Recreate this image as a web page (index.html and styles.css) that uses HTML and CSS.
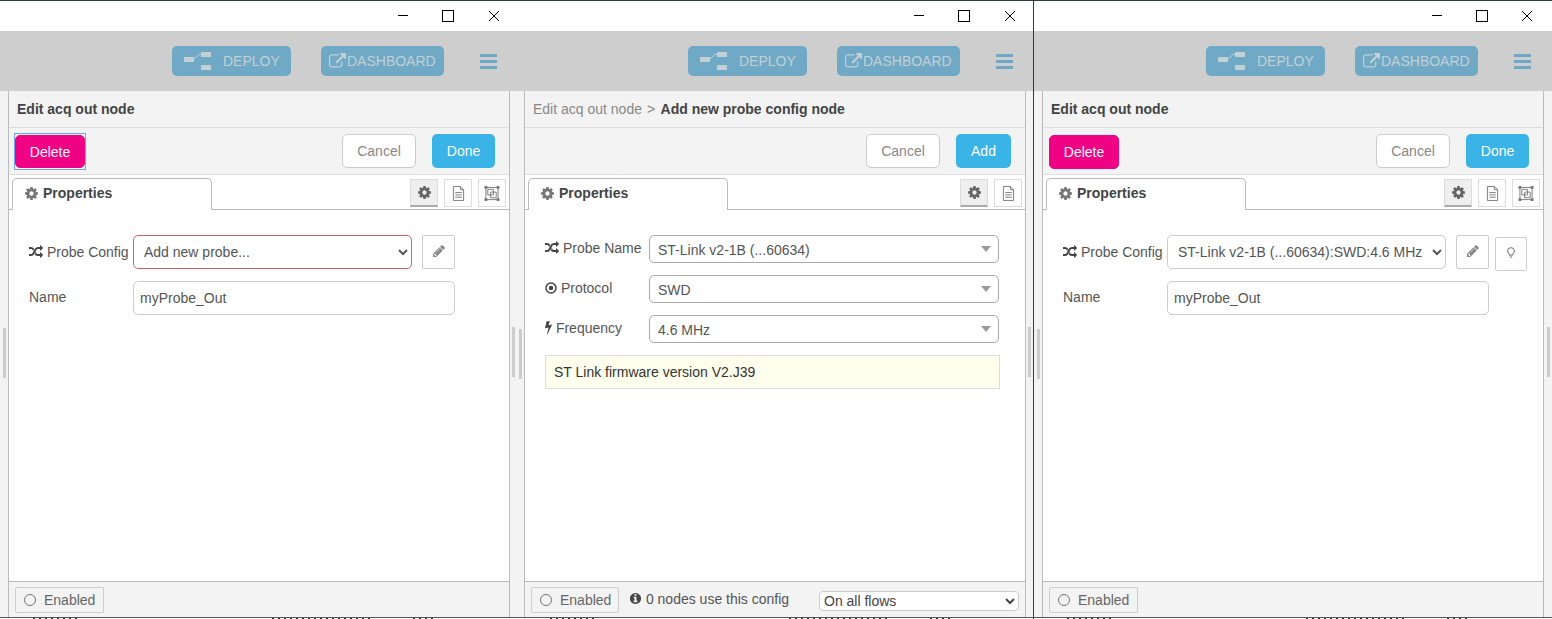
FILE: index.html
```html
<!DOCTYPE html>
<html lang="en">
<head>
    <meta charset="UTF-8">
    <title>Edit acq out node</title>
    <link rel="stylesheet" href="styles.css">
</head>
<body>
    <svg class="sprite" xmlns="http://www.w3.org/2000/svg">
        <symbol id="i-cog" viewBox="0 0 1792 1792"><path d="M1152 896q0-106-75-181t-181-75-181 75-75 181 75 181 181 75 181-75 75-181zm512-109v222q0 12-8 23t-20 13l-185 28q-19 54-39 91 35 50 107 138 10 12 10 25t-9 23q-27 37-99 108t-94 71q-12 0-26-9l-138-108q-44 23-91 38-16 136-29 186-7 28-36 28h-222q-14 0-24.5-8.5t-11.5-21.5l-28-184q-49-16-90-37l-141 107q-10 9-25 9-14 0-25-11-126-114-165-168-7-10-7-23 0-12 8-23 15-21 51-66.5t54-70.5q-27-50-41-99l-183-27q-13-2-21-12.5t-8-23.5v-222q0-12 8-23t19-13l186-28q14-46 39-92-40-57-107-138-10-12-10-24 0-10 9-23 26-36 98.5-107.5t94.5-71.5q13 0 26 10l138 107q44-23 91-38 16-136 29-186 7-28 36-28h222q14 0 24.5 8.5t11.5 21.5l28 184q49 16 90 37l142-107q9-9 24-9 13 0 25 10 129 119 165 170 7 8 7 22 0 12-8 23-15 21-51 66.5t-54 70.5q26 50 41 98l183 28q13 2 21 12.5t8 23.5z"/></symbol>
        <symbol id="i-pencil" viewBox="0 0 1792 1792"><path d="M491 1536l91-91-235-235-91 91v107h128v128h107zm523-928q0-22-22-22-10 0-17 7l-542 542q-7 7-7 17 0 22 22 22 10 0 17-7l542-542q7-7 7-17zm-54-192l416 416-832 832h-416v-416zm683 96q0 53-37 90l-166 166-416-416 166-165q36-38 90-38 53 0 91 38l235 234q37 39 37 91z"/></symbol>
        <symbol id="i-random" viewBox="0 0 1792 1792"><path d="M666 481q-60 92-137 273-22-45-37-72.5t-40.5-63.5-51-56.5-63-35-81.5-14.5h-224q-14 0-23-9t-9-23v-192q0-14 9-23t23-9h224q250 0 410 225zm1126 799q0 14-9 23l-320 320q-9 9-23 9-13 0-22.5-9.5t-9.5-22.5v-192q-32 0-85 .5t-81 1-73-1-71-5-64-10.5-63-18.5-58-28.5-59-40-55-53.5-56-69.5q59-93 136-273 22 45 37 72.5t40.5 63.5 51 56.5 63 35 81.5 14.5h256v-192q0-14 9-23t23-9q12 0 24 10l319 319q9 9 9 23zm0-896q0 14-9 23l-320 320q-9 9-23 9-13 0-22.5-9.5t-9.5-22.5v-192h-256q-48 0-87 15t-69 45-51 61.5-45 77.5q-32 62-78 171-29 66-49.5 111t-54 105-64 100-74 83-90 68.5-106.5 42-128 16.5h-224q-14 0-23-9t-9-23v-192q0-14 9-23t23-9h224q48 0 87-15t69-45 51-61.5 45-77.5q32-62 78-171 29-66 49.5-111t54-105 64-100 74-83 90-68.5 106.5-42 128-16.5h256v-192q0-14 9-23t23-9q12 0 24 10l319 319q9 9 9 23z"/></symbol>
        <symbol id="i-link" viewBox="0 0 1792 1792"><path d="M1408 928v320q0 119-84.5 203.5t-203.5 84.5h-832q-119 0-203.5-84.5t-84.5-203.5v-832q0-119 84.5-203.5t203.5-84.5h704q14 0 23 9t9 23v64q0 14-9 23t-23 9h-704q-66 0-113 47t-47 113v832q0 66 47 113t113 47h832q66 0 113-47t47-113v-320q0-14 9-23t23-9h64q14 0 23 9t9 23zm384-864v512q0 26-19 45t-45 19-45-19l-176-176-652 652q-10 10-23 10t-23-10l-114-114q-10-10-10-23t10-23l652-652-176-176q-19-19-19-45t19-45 45-19h512q26 0 45 19t19 45z"/></symbol>
        <symbol id="i-bolt" viewBox="440 220 920 1570"><path d="M1333 566q18 20 7 44l-540 1157q-13 25-42 25-4 0-14-2-17-5-25.5-19t-4.5-30l197-808-406 101q-4 1-12 1-18 0-31-11-18-15-13-39l201-825q4-14 16-23t28-9h328q19 0 32 12.5t13 29.5q0 8-5 18l-171 463 396-98q8-2 12-2 19 0 34 15z"/></symbol>
        <symbol id="i-info" viewBox="0 0 1792 1792"><path d="M1152 1376v-160q0-14-9-23t-23-9h-96v-512q0-14-9-23t-23-9h-320q-14 0-23 9t-9 23v160q0 14 9 23t23 9h96v320h-96q-14 0-23 9t-9 23v160q0 14 9 23t23 9h448q14 0 23-9t9-23zm-128-896v-160q0-14-9-23t-23-9h-192q-14 0-23 9t-9 23v160q0 14 9 23t23 9h192q14 0 23-9t9-23zm640 416q0 209-103 385.5t-279.5 279.5-385.5 103-385.5-103-279.5-279.5-103-385.5 103-385.5 279.5-279.5 385.5-103 385.5 103 279.5 279.5 103 385.5z"/></symbol>
        <symbol id="i-dot" viewBox="0 0 12 12"><circle cx="6" cy="6" r="5" fill="none" stroke="currentColor" stroke-width="1.5"/><circle cx="6" cy="6" r="2.2"/></symbol>
        <symbol id="i-doc" viewBox="0 0 14 16"><path d="M1.5 .5h7.5l3.5 3.5v11.5h-11zM9 .5v3.5h3.5M3.5 7h7M3.500 9.500h7M3.500 12h7" fill="none" stroke="currentColor"/></symbol>
        <symbol id="i-frame" viewBox="0 0 16 16"><path d="M1.500 1.500h13v13h-13z" fill="none" stroke="currentColor"/><path d="M3.500 3.500h6v6h-6zM6.500 6.500h6v6h-6z" fill="none" stroke="currentColor"/><path d="M0 0h3v3h-3zM13 0h3v3h-3zM0 13h3v3h-3zM13 13h3v3h-3z"/></symbol>
        <symbol id="i-bulb" viewBox="0 0 10 14"><path d="M3.200 9.500c0-1.600-2.400-2.500-2.400-5a4.200 4 0 0 1 8.400 0c0 2.500-2.400 3.400-2.400 5z" fill="none" stroke="currentColor" stroke-width="1.300"/><path d="M3.300 10.500h3.400v1h-3.400zM4 12.300h2v1h-2z"/></symbol>
        <symbol id="i-deploy" viewBox="0 0 27 18"><path d="M0 5h10v5h-10zM17 0h10v5h-10zM17 13h10v5h-10z"/><path d="M9 8l6-5.500h3" fill="none" stroke="currentColor"/></symbol>
        <symbol id="i-close" viewBox="0 0 10 10"><path d="M0 0l10 10M10 0l-10 10" fill="none" stroke="currentColor"/></symbol>
    </svg>

    <div class="win win-a">
        <div class="titlebar">
            <span class="ctl ctl-min"></span><span class="ctl ctl-max"></span><span class="ctl ctl-close"><svg class="close-icon"><use href="#i-close"/></svg></span>
        </div>
        <div class="header">
            <button class="head-btn deploy"><svg class="deploy-icon"><use href="#i-deploy"/></svg>DEPLOY</button>
            <button class="head-btn dash"><svg class="link-icon"><use href="#i-link"/></svg>DASHBOARD</button>
            <div class="burger"><span></span><span></span><span></span></div>
        </div>
        <div class="main">
            <div class="gutter gutter-l"><i></i></div>
            <div class="tray">
                <div class="tray-title">Edit acq out node</div>
                <div class="toolbar">
                    <button class="btn btn-delete btn-focus">Delete</button>
                    <button class="btn btn-cancel">Cancel</button>
                    <button class="btn btn-primary btn-done">Done</button>
                </div>
                <div class="tabs">
                    <div class="tab"><svg class="tab-icon"><use href="#i-cog"/></svg>Properties</div>
                    <div class="side-btns">
                        <span class="side-btn selected"><svg class="side-cog"><use href="#i-cog"/></svg></span>
                        <span class="side-btn"><svg class="side-doc"><use href="#i-doc"/></svg></span>
                        <span class="side-btn"><svg class="side-frame"><use href="#i-frame"/></svg></span>
                    </div>
                </div>
                <div class="form">
                    <div class="row">
                        <label><svg class="lbl-icon"><use href="#i-random"/></svg> Probe Config</label>
                        <select class="sel sel-error"><option>Add new probe...</option></select>
                        <button class="edit-btn"><svg class="edit-icon"><use href="#i-pencil"/></svg></button>
                    </div>
                    <div class="row row-name">
                        <label>Name</label>
                        <input class="txt" type="text" value="myProbe_Out">
                    </div>
                </div>
                <div class="footer">
                    <button class="enabled"><i class="ring"></i>Enabled</button>
                </div>
            </div>
            <div class="gutter gutter-r"><i></i></div>
        </div>
        <div class="peek"><span></span><span></span><span></span></div>
    </div>

    <div class="win win-b">
        <div class="titlebar">
            <span class="ctl ctl-min"></span><span class="ctl ctl-max"></span><span class="ctl ctl-close"><svg class="close-icon"><use href="#i-close"/></svg></span>
        </div>
        <div class="header">
            <button class="head-btn deploy"><svg class="deploy-icon"><use href="#i-deploy"/></svg>DEPLOY</button>
            <button class="head-btn dash"><svg class="link-icon"><use href="#i-link"/></svg>DASHBOARD</button>
            <div class="burger"><span></span><span></span><span></span></div>
        </div>
        <div class="main">
            <div class="gutter gutter-l"><i></i></div>
            <div class="tray">
                <div class="tray-title"><span class="crumb">Edit acq out node</span><span class="crumb crumb-sep">&gt;</span> Add new probe config node</div>
                <div class="toolbar">
                    <button class="btn btn-cancel">Cancel</button>
                    <button class="btn btn-primary btn-add">Add</button>
                </div>
                <div class="tabs">
                    <div class="tab"><svg class="tab-icon"><use href="#i-cog"/></svg>Properties</div>
                    <div class="side-btns">
                        <span class="side-btn selected"><svg class="side-cog"><use href="#i-cog"/></svg></span>
                        <span class="side-btn"><svg class="side-doc"><use href="#i-doc"/></svg></span>
                    </div>
                </div>
                <div class="form">
                    <div class="row row-config">
                        <label><svg class="lbl-icon"><use href="#i-random"/></svg> Probe Name</label>
                        <div class="combo">ST-Link v2-1B (...60634)</div>
                    </div>
                    <div class="row row-config">
                        <label><svg class="lbl-icon lbl-dot"><use href="#i-dot"/></svg> Protocol</label>
                        <div class="combo">SWD</div>
                    </div>
                    <div class="row row-config">
                        <label><svg class="lbl-icon lbl-bolt"><use href="#i-bolt"/></svg> Frequency</label>
                        <div class="combo">4.6 MHz</div>
                    </div>
                    <div class="tip">ST Link firmware version V2.J39</div>
                </div>
                <div class="footer">
                    <button class="enabled"><i class="ring"></i>Enabled</button>
                    <span class="users"><svg class="info-icon"><use href="#i-info"/></svg> 0 nodes use this config</span>
                    <select class="scope"><option>On all flows</option></select>
                </div>
            </div>
            <div class="gutter gutter-r"><i></i></div>
        </div>
        <div class="peek"><span></span><span></span><span></span></div>
    </div>

    <div class="win win-c">
        <div class="titlebar">
            <span class="ctl ctl-min"></span><span class="ctl ctl-max"></span><span class="ctl ctl-close"><svg class="close-icon"><use href="#i-close"/></svg></span>
        </div>
        <div class="header">
            <button class="head-btn deploy"><svg class="deploy-icon"><use href="#i-deploy"/></svg>DEPLOY</button>
            <button class="head-btn dash"><svg class="link-icon"><use href="#i-link"/></svg>DASHBOARD</button>
            <div class="burger"><span></span><span></span><span></span></div>
        </div>
        <div class="main">
            <div class="gutter gutter-l"><i></i></div>
            <div class="tray">
                <div class="tray-title">Edit acq out node</div>
                <div class="toolbar">
                    <button class="btn btn-delete">Delete</button>
                    <button class="btn btn-cancel">Cancel</button>
                    <button class="btn btn-primary btn-done">Done</button>
                </div>
                <div class="tabs">
                    <div class="tab"><svg class="tab-icon"><use href="#i-cog"/></svg>Properties</div>
                    <div class="side-btns">
                        <span class="side-btn selected"><svg class="side-cog"><use href="#i-cog"/></svg></span>
                        <span class="side-btn"><svg class="side-doc"><use href="#i-doc"/></svg></span>
                        <span class="side-btn"><svg class="side-frame"><use href="#i-frame"/></svg></span>
                    </div>
                </div>
                <div class="form">
                    <div class="row">
                        <label><svg class="lbl-icon"><use href="#i-random"/></svg> Probe Config</label>
                        <select class="sel"><option>ST-Link v2-1B (...60634):SWD:4.6 MHz</option></select>
                        <button class="edit-btn"><svg class="edit-icon"><use href="#i-pencil"/></svg></button>
                        <button class="bulb-btn"><svg class="bulb-icon"><use href="#i-bulb"/></svg></button>
                    </div>
                    <div class="row row-name">
                        <label>Name</label>
                        <input class="txt" type="text" value="myProbe_Out">
                    </div>
                </div>
                <div class="footer">
                    <button class="enabled"><i class="ring"></i>Enabled</button>
                </div>
            </div>
            <div class="gutter gutter-r"><i></i></div>
        </div>
        <div class="peek"><span></span><span></span><span></span></div>
    </div>
</body>
</html>
```
FILE: styles.css
```css
* {
    box-sizing: border-box;
}

body {
    margin: 0;
    width: 1552px;
    height: 619px;
    display: flex;
    overflow: hidden;
    font-family: "Liberation Sans", Arial, sans-serif;
    font-size: 14px;
    color: #555;
    background: #fff;
}

button,
select,
input {
    font-family: inherit;
    font-size: 14px;
}

svg {
    fill: currentColor;
    flex: none;
}

.sprite {
    display: none;
}

/* windows */
.win {
    height: 619px;
    display: flex;
    flex-direction: column;
}

.win-a {
    width: 517px;
}

.win-b {
    width: 517px;
    border-right: 1px solid #2f3d38;
}

.win-c {
    width: 518px;
}

.titlebar {
    height: 31px;
    flex: none;
    display: flex;
    justify-content: flex-end;
    padding-right: 1px;
    background: #fff;
    border-top: 1px solid #2f3d38;
}

.win-c .titlebar {
    padding-right: 3px;
}

.ctl {
    width: 45px;
    height: 29px;
    display: flex;
    align-items: center;
    justify-content: center;
}

.ctl-min::before {
    content: "";
    width: 10px;
    height: 1px;
    background: #000;
}

.ctl-max::before {
    content: "";
    width: 10px;
    height: 10px;
    border: 1px solid #000;
}

.ctl-close {
    margin-left: 1px;
    color: #000;
}

.win-c .ctl-close {
    margin-left: 0;
}

.close-icon {
    width: 10px;
    height: 10px;
}

/* deploy bar */
.header {
    height: 60px;
    flex: none;
    display: flex;
    align-items: center;
    justify-content: flex-end;
    padding-right: 20px;
    background: #cecece;
}

.win-c .header {
    padding-right: 21px;
}

.head-btn {
    height: 30px;
    display: flex;
    align-items: center;
    border: none;
    border-radius: 5px;
    padding: 0;
    background: #6fa9c5;
    color: #c3d0d6;
}

.deploy {
    width: 119px;
    margin-right: 30px;
    padding-left: 12px;
}

.deploy-icon {
    width: 27px;
    height: 18px;
    margin-right: 12px;
}

.dash {
    width: 123px;
    padding-left: 8px;
}

.link-icon {
    width: 17px;
    height: 17px;
    margin-right: 1px;
}

.burger {
    width: 17px;
    margin-left: 36px;
    display: flex;
    flex-direction: column;
    gap: 3px;
}

.burger span {
    height: 3px;
    background: #6fa9c5;
}

/* tray */
.main {
    height: 526px;
    flex: none;
    display: flex;
    background: #f3f3f3;
}

.gutter {
    display: flex;
    align-items: center;
    justify-content: center;
}

.gutter i {
    width: 3px;
    height: 50px;
    background: #ccc;
}

.gutter-r {
    padding-bottom: 4px;
    width: 7px;
}

.gutter-l {
    width: 7px;
}

.win-a .gutter-l {
    width: 8px;
    padding-bottom: 2px;
}

.win-c .gutter-l,
.win-c .gutter-r {
    width: 8px;
}

.tray {
    width: 502px;
    flex: none;
    display: flex;
    flex-direction: column;
    background: #fff;
    border-left: 1px solid #bbb;
    border-right: 1px solid #bbb;
}

.tray-title {
    height: 37px;
    flex: none;
    padding-left: 8px;
    line-height: 36px;
    font-weight: bold;
    color: #444;
    background: #f3f3f3;
    border-bottom: 1px solid #ddd;
}

.crumb {
    font-weight: normal;
    color: #888;
}

.crumb-sep {
    margin-left: 5px;
    margin-right: 2px;
}

.toolbar {
    height: 47px;
    flex: none;
    display: flex;
    align-items: flex-start;
    justify-content: flex-end;
    gap: 16px;
    padding: 6px 14px 0 6px;
    background: #f3f3f3;
    border-bottom: 1px solid #ddd;
}

.btn {
    height: 34px;
    padding: 0;
    border-radius: 5px;
    border: 1px solid transparent;
    color: #fff;
}

.btn-delete {
    width: 70px;
    margin: 1px auto 0 0;
    background: #ef0283;
    border-color: #ef0283;
}

/* square focus frame round the delete button */
.btn-focus {
    position: relative;
    height: 33px;
}

.btn-focus::after {
    content: "";
    position: absolute;
    inset: -3px -2px;
    border: 1px solid #6ea8f5;
}

.btn-cancel {
    width: 74px;
    background: #fff;
    border-color: #ccc;
    color: #888;
}

.btn-primary {
    background: #3ab3e6;
}

.btn-done {
    width: 63px;
}

.btn-add {
    width: 55px;
}

.tabs {
    height: 35px;
    flex: none;
    display: flex;
    padding: 0 3px;
    border-bottom: 1px solid #bbb;
}

.tab {
    width: 200px;
    height: 32px;
    margin-top: 3px;
    display: flex;
    align-items: center;
    padding: 0 0 3px 11px;
    background: #fff;
    border: 1px solid #bbb;
    border-bottom: none;
    border-radius: 5px 5px 0 0;
    font-weight: bold;
    color: #444;
}

.tab-icon {
    width: 15px;
    height: 15px;
    margin-right: 4px;
    color: #777;
}

.side-btns {
    margin-left: auto;
    display: flex;
    gap: 6px;
    padding-top: 4px;
}

.side-btn {
    width: 28px;
    height: 28px;
    display: flex;
    align-items: center;
    justify-content: center;
    border: 1px solid #ddd;
    color: #777;
}

.side-btn.selected {
    background: #efefef;
    border-bottom: 2px solid #aaa;
    color: #666;
}

.side-cog {
    width: 15px;
    height: 15px;
}

.side-doc {
    width: 13px;
    height: 15px;
}

.side-frame {
    width: 16px;
    height: 15px;
}

/* form */
.form {
    flex: 1;
    padding: 25px 0 0 20px;
}

.row {
    display: flex;
    align-items: center;
    margin-bottom: 12px;
}

.row label {
    width: 104px;
    flex: none;
    white-space: nowrap;
}

.row-name label {
    margin-top: -2px;
}

.lbl-icon {
    width: 14px;
    height: 14px;
    vertical-align: -2px;
    color: #444;
}

.lbl-dot {
    width: 12px;
    height: 12px;
    vertical-align: -1px;
}

.lbl-bolt {
    width: 7px;
    height: 14px;
}

.sel {
    width: 279px;
    height: 34px;
    padding: 0 6px;
    color: #555;
    background: #fff;
    border: 1px solid #ccc;
    border-radius: 5px;
}

.sel-error {
    border-color: #d6615f;
}

.edit-btn {
    width: 33px;
    height: 34px;
    margin-left: 10px;
    padding: 0;
    background: #fff;
    border: 1px solid #ccc;
    border-radius: 2px;
    color: #888;
}

.edit-icon {
    width: 14px;
    height: 14px;
}

.bulb-btn {
    width: 32px;
    height: 34px;
    margin: 2px 0 -2px 6px;
    padding: 0;
    background: #fff;
    border: 1px solid #ccc;
    border-radius: 2px;
    color: #777;
}

.bulb-icon {
    width: 8px;
    height: 12px;
}

.txt {
    width: 322px;
    height: 34px;
    padding: 0 6px;
    color: #555;
    background: #fff;
    border: 1px solid #ccc;
    border-radius: 5px;
}

.row-config {
    height: 28px;
}

.row-config label {
    margin-top: -2px;
}

.combo {
    width: 350px;
    height: 28px;
    padding: 3px 0 0 8px;
    line-height: 21px;
    color: #555;
    border: 1px solid #aaa;
    border-radius: 5px;
    display: flex;
    align-items: center;
    justify-content: space-between;
}

.combo::after {
    content: "";
    margin-right: 7px;
    margin-top: -3px;
    border-left: 5px solid transparent;
    border-right: 5px solid transparent;
    border-top: 6px solid #999;
}

.tip {
    width: 455px;
    height: 34px;
    padding-left: 8px;
    line-height: 32px;
    color: #333;
    background: #ffffee;
    border: 1px solid #ddd;
}

/* footer */
.footer {
    height: 36px;
    flex: none;
    display: flex;
    align-items: center;
    padding: 0 6px;
    background: #f3f3f3;
    border-top: 1px solid #bbb;
}

.enabled {
    width: 89px;
    height: 26px;
    display: flex;
    align-items: center;
    padding: 0 0 0 8px;
    background: #f3f3f3;
    border: 1px solid #ccc;
    border-radius: 2px;
    color: #666;
}

.win-b .enabled {
    width: 88px;
}

.ring {
    width: 12px;
    height: 12px;
    margin-right: 8px;
    border: 1px solid #777;
    border-radius: 50%;
}

.users {
    margin: -2px 0 0 10px;
    white-space: nowrap;
}

.info-icon {
    width: 13px;
    height: 13px;
    vertical-align: -1px;
    color: #444;
}

.scope {
    width: 200px;
    height: 20px;
    margin: 2px 0 0 auto;
    color: #444;
    background: #fff;
    border: 1px solid #ccc;
    border-radius: 4px;
}

/* sliver of the page under each window, just specks of whatever is behind */
.peek {
    height: 2px;
    flex: none;
    display: flex;
    padding-left: 33px;
    background: #fff;
    border-top: 1px solid #555;
}

.peek span {
    height: 1px;
    background: repeating-linear-gradient(90deg, #333 0 2px, transparent 2px 6px);
}

.peek span:nth-child(1) {
    width: 44px;
    margin-right: 195px;
}

.peek span:nth-child(2) {
    width: 100px;
    margin-right: 41px;
}

.peek span:nth-child(3) {
    width: 20px;
}
```
